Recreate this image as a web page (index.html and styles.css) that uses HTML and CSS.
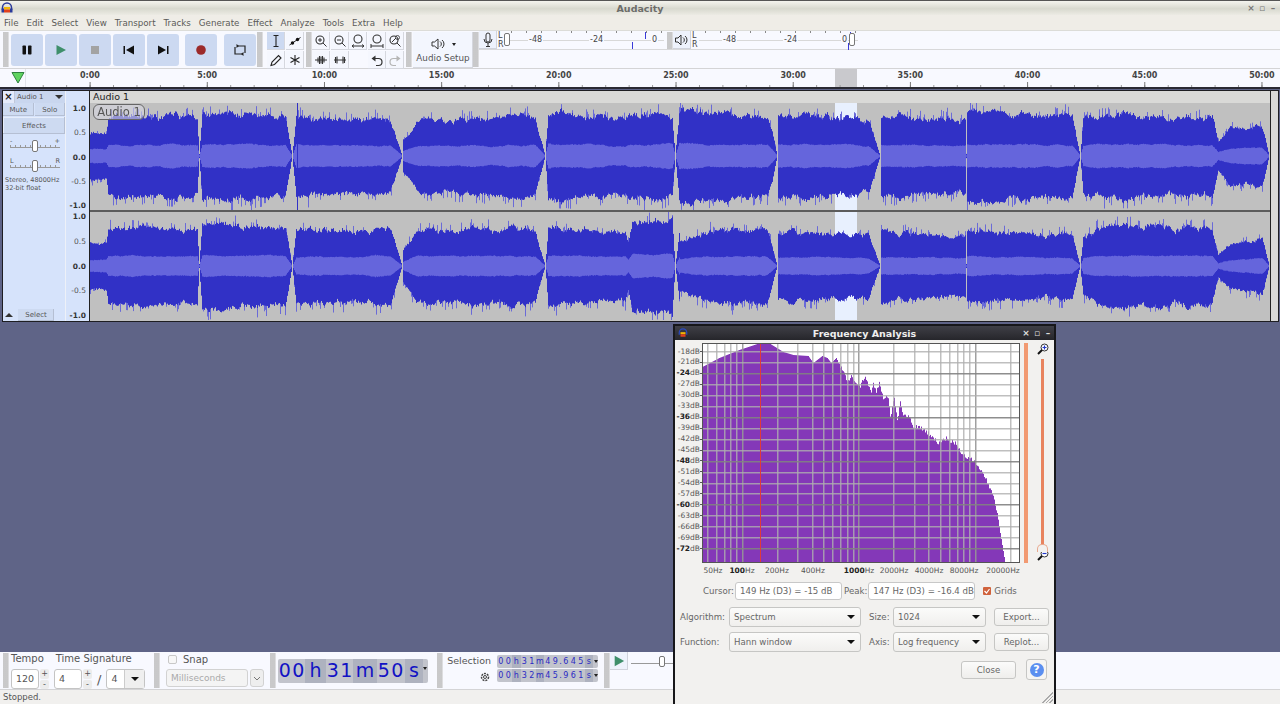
FILE: index.html
```html
<!DOCTYPE html>
<html lang="en">
<head>
    <meta charset="UTF-8">
    <title>Audacity</title>
    <link rel="stylesheet" href="styles.css">
</head>
<body>
<div class="app">
    <div class="titlebar">
        <svg class="app-logo" width="12" height="12" viewBox="0 0 12 12"><path d="M1.5 8V5.5a4.5 4.5 0 0 1 9 0V8" fill="none" stroke="#2b3a9a" stroke-width="1.5"/><rect x="3" y="5" width="6" height="2.5" fill="#f2b705"/><rect x="3" y="7.5" width="6" height="3" fill="#e0401c"/><rect x="0.5" y="6.5" width="2.5" height="4" fill="#2b3a9a"/><rect x="9" y="6.5" width="2.5" height="4" fill="#2b3a9a"/></svg>
        <span class="title-text">Audacity</span>
        <div class="win-buttons"><span>×</span><span class="win-restore">▫</span><span>–</span></div>
    </div>

    <div class="menubar">
        <span>File</span><span>Edit</span><span>Select</span><span>View</span><span>Transport</span><span>Tracks</span><span>Generate</span><span>Effect</span><span>Analyze</span><span>Tools</span><span>Extra</span><span>Help</span>
    </div>

    <div class="toolbars">
        <div class="gripper"></div>
        <div class="transport">
            <button class="t-btn"><svg width="14" height="14" viewBox="0 0 14 14"><rect x="2.5" y="2.5" width="3.5" height="9" rx="0.8" fill="#111"/><rect x="8" y="2.5" width="3.5" height="9" rx="0.8" fill="#111"/></svg></button>
            <button class="t-btn"><svg width="14" height="14" viewBox="0 0 14 14"><path d="M2.5 2 12 7l-9.500 5z" fill="#3f8f6b"/></svg></button>
            <button class="t-btn"><svg width="14" height="14" viewBox="0 0 14 14"><rect x="3" y="3" width="8" height="8" fill="#a3a3a3"/></svg></button>
            <button class="t-btn"><svg width="14" height="14" viewBox="0 0 14 14"><rect x="1.500" y="3" width="1.500" height="8" fill="#111"/><path d="M12 2.500v9L4 7z" fill="#111"/></svg></button>
            <button class="t-btn"><svg width="14" height="14" viewBox="0 0 14 14"><path d="M2 2.500v9L10 7z" fill="#111"/><rect x="11" y="3" width="1.500" height="8" fill="#111"/></svg></button>
            <button class="t-btn t-record"><svg width="14" height="14" viewBox="0 0 14 14"><circle cx="7" cy="7" r="4.800" fill="#9c2a2a"/></svg></button>
            <button class="t-btn t-loop"><svg width="14" height="14" viewBox="0 0 14 14"><path d="M4 3h8v7M10 11H2V4" fill="none" stroke="#222" stroke-width="1.200"/><path d="M3.500 1v4L6 3zM10.500 13V9L8 11z" fill="#222"/></svg></button>
        </div>
        <div class="gripper"></div>

        <div class="tools">
            <button class="tool-btn active"><svg width="14" height="14" viewBox="0 0 14 14"><path d="M4.500 1.500h5M7 1.500v11M4.500 12.500h5" fill="none" stroke="#222" stroke-width="1.100"/></svg></button>
            <button class="tool-btn"><svg width="14" height="14" viewBox="0 0 14 14"><path d="M1.500 11 12.500 3.500" stroke="#222" stroke-width="1"/><circle cx="4.500" cy="9" r="1.700" fill="#111"/><circle cx="9.500" cy="5.500" r="1.700" fill="#111"/></svg></button>
            <button class="tool-btn"><svg width="14" height="14" viewBox="0 0 14 14"><path d="M2 12.500 3 9l6.500-6.500 2.500 2.500L5.500 11.500z" fill="none" stroke="#222" stroke-width="1.100"/></svg></button>
            <button class="tool-btn"><svg width="14" height="14" viewBox="0 0 14 14"><path d="M7 2v10M2.500 4.500l9 5M11.500 4.500l-9 5" stroke="#222" stroke-width="1.100"/></svg></button>
        </div>
        <div class="gripper"></div>

        <div class="tools tools-zoom">
            <button class="tool-btn"><svg width="14" height="14" viewBox="0 0 14 14"><circle cx="6" cy="6" r="4" fill="none" stroke="#333" stroke-width="1.100"/><path d="m9 9 3.500 3.500M4 6h4M6 4v4" stroke="#333" stroke-width="1"/></svg></button>
            <button class="tool-btn"><svg width="14" height="14" viewBox="0 0 14 14"><circle cx="6" cy="6" r="4" fill="none" stroke="#333" stroke-width="1.100"/><path d="m9 9 3.500 3.500M4 6h4" stroke="#333" stroke-width="1"/></svg></button>
            <button class="tool-btn"><svg width="14" height="14" viewBox="0 0 14 14"><circle cx="7" cy="5" r="4" fill="none" stroke="#333" stroke-width="1.100"/><path d="M1 12h12M1 12l2-1.500M1 12l2 1.500M13 12l-2-1.500M13 12l-2 1.500" fill="none" stroke="#333"/></svg></button>
            <button class="tool-btn"><svg width="14" height="14" viewBox="0 0 14 14"><circle cx="7" cy="5" r="4" fill="none" stroke="#333" stroke-width="1.100"/><path d="M1 12h12M1 10v4M13 10v4" fill="none" stroke="#333"/></svg></button>
            <button class="tool-btn"><svg width="14" height="14" viewBox="0 0 14 14"><circle cx="6" cy="6" r="4" fill="none" stroke="#333" stroke-width="1.100"/><path d="m9 9 3.500 3.500M4 8l4-4" stroke="#333" stroke-width="1"/><circle cx="9.500" cy="3.500" r="2" fill="none" stroke="#333" stroke-width=".8"/></svg></button>
            <button class="tool-btn"><svg width="14" height="14" viewBox="0 0 14 14"><path d="M1 7h12" stroke="#333"/><path d="M4 4.500v5M5.500 3v8M7 3.500v7M8.500 3v8M10 4.500v5" stroke="#333" stroke-width="1.100"/></svg></button>
            <button class="tool-btn"><svg width="14" height="14" viewBox="0 0 14 14"><path d="M1 7h12" stroke="#333"/><path d="M2.500 4v6M4 3.500v7M10 3.500v7M11.500 4v6" stroke="#333" stroke-width="1.100"/></svg></button>
            <div class="tool-gap"></div>
            <button class="tool-btn"><svg width="14" height="14" viewBox="0 0 14 14"><path d="M3.500 5.500h5a3 3 0 0 1 0 7H6" fill="none" stroke="#333" stroke-width="1.200"/><path d="M5.500 2.500v6l-4-3z" fill="#333"/></svg></button>
            <button class="tool-btn tool-off"><svg width="14" height="14" viewBox="0 0 14 14"><path d="M10.500 5.500h-5a3 3 0 0 0 0 7H8" fill="none" stroke="#b5b5b5" stroke-width="1.200"/><path d="M8.500 2.500v6l4-3z" fill="#b5b5b5"/></svg></button>
        </div>
        <div class="gripper"></div>

        <button class="audio-setup">
            <span class="audio-icon"><svg width="20" height="14" viewBox="0 0 20 14"><path d="M2 5h2.500L8 2v10L4.500 9H2z" fill="none" stroke="#333"/><path d="M10 4.500a3 3 0 0 1 0 5M12 3a5 5 0 0 1 0 8" fill="none" stroke="#333"/></svg><i class="mini-caret"></i></span>
            <span>Audio Setup</span>
        </button>
        <div class="gripper"></div>

        <div class="meter-stack">
            <div class="meter-row">
                <button class="meter-btn"><svg width="14" height="16" viewBox="0 0 14 16"><rect x="5" y="1" width="4" height="9" rx="2" fill="none" stroke="#333"/><path d="M3 7a4 4 0 0 0 8 0M7 11v3M5 14.500h4" fill="none" stroke="#333"/></svg></button>
                <div class="meter meter-in">
                    <div class="lr"><span>L</span><span>R</span></div>
                    <div class="meter-scale"><span class="m48">-48</span><span class="m24">-24</span><span class="m0">0</span><i class="peak peak-a"></i><i class="peak peak-b"></i></div>
                    <div class="meter-thumb"></div>
                </div>
                <div class="gripper"></div>
                <button class="meter-btn"><svg width="16" height="14" viewBox="0 0 16 14"><path d="M1.500 5H4l3-3v10L4 9H1.500z" fill="none" stroke="#333"/><path d="M9 4.500a3 3 0 0 1 0 5M11 3a5 5 0 0 1 0 8" fill="none" stroke="#333"/></svg></button>
                <div class="meter meter-out">
                    <div class="lr"><span>L</span><span>R</span></div>
                    <div class="meter-scale"><span class="m48">-48</span><span class="m24">-24</span><span class="m0">0</span><i class="peak peak-c"></i><i class="peak peak-d"></i></div>
                    <div class="meter-thumb"></div>
                </div>
            </div>
            <div class="meter-blank"></div>
        </div>
    </div>

    <div class="ruler">
        <div class="ruler-head"><svg width="14" height="13" viewBox="0 0 14 13"><path d="M1 1.500h12L7 12z" fill="#5fd35f" stroke="#2f7f3f"/></svg></div>
        <div class="ruler-marks">
            <span>0:00</span><span>5:00</span><span>10:00</span><span>15:00</span><span>20:00</span><span>25:00</span><span>30:00</span><span>35:00</span><span>40:00</span><span>45:00</span><span>50:00</span>
        </div>
    </div>

    <div class="tracks">
        <div class="track">
            <div class="track-panel">
                <div class="panel-title"><button class="panel-close">×</button><div class="panel-name">Audio 1<i class="caret"></i></div></div>
                <div class="panel-mute"><button>Mute</button><button>Solo</button></div>
                <button class="panel-effects">Effects</button>
                <div class="panel-slider">
                    <div class="slider-labels"><span>-</span><span>+</span></div>
                    <div class="slider-line"><i></i></div>
                </div>
                <div class="panel-slider">
                    <div class="slider-labels"><span>L</span><span>R</span></div>
                    <div class="slider-line"><i></i></div>
                </div>
                <div class="panel-info">Stereo, 48000Hz<br>32-bit float</div>
                <div class="panel-foot"><i class="up-caret"></i><button>Select</button></div>
            </div>
            <div class="vruler">
                <div class="vscale vscale-top"><b>1.0</b><span>0.5</span><b>0.0</b><span>-0.5</span><b>-1.0</b></div>
                <div class="vscale vscale-low"><b>1.0</b><span>0.5</span><b>0.0</b><span>-0.5</span><b>-1.0</b></div>
            </div>
            <div class="wave-col">
                <div class="clip-title">Audio 1</div>
                <canvas id="wave0" class="wave" width="1180" height="107"></canvas>
                <div class="wave-divider"></div>
                <canvas id="wave1" class="wave" width="1180" height="108"></canvas>
                <div class="clip-label">Audio 1</div>
            </div>
            <div class="track-edge"></div>
        </div>
    </div>

    <div class="desktop"></div>

    <div class="bottombar">
        <div class="gripper"></div>
        <div class="tempo-box">
            <div class="tempo-labels"><span>Tempo</span><span>Time Signature</span></div>
            <div class="tempo-inputs">
                <div class="num-input w-tempo">120</div>
                <div class="spin"><span>+</span><span>-</span></div>
                <div class="num-input w-sig">4</div>
                <div class="spin"><span>+</span><span>-</span></div>
                <span class="slash">/</span>
                <div class="sig-combo"><span>4</span><div class="sig-drop"><i class="caret caret-dark"></i></div></div>
            </div>
        </div>
        <div class="gripper"></div>
        <div class="snap-box">
            <label class="snap-check"><i class="check-off"></i>Snap</label>
            <div class="snap-row">
                <div class="snap-combo">Milliseconds</div>
                <div class="snap-drop"><svg width="8" height="5" viewBox="0 0 8 5"><path d="m1 1 3 3 3-3" fill="none" stroke="#777"/></svg></div>
            </div>
        </div>
        <div class="gripper"></div>
        <div class="time-big">
            <span class="d">0</span><span class="d">0</span><span class="u u-h">h</span><span class="d">3</span><span class="d">1</span><span class="u u-m">m</span><span class="d">5</span><span class="d">0</span><span class="u u-s">s</span><i class="mini-caret"></i>
        </div>
        <div class="gripper"></div>
        <div class="selection-box">
            <div class="sel-labels">
                <span>Selection</span>
                <svg width="12" height="12" viewBox="0 0 12 12"><circle cx="6" cy="6" r="3.500" fill="none" stroke="#444" stroke-width="1.500" stroke-dasharray="2 1"/><circle cx="6" cy="6" r="1.500" fill="none" stroke="#444"/></svg>
            </div>
            <div class="sel-times">
                <div class="time-small"><span>0</span><span>0</span><span class="u">h</span><span>3</span><span>1</span><span class="u">m</span><span>4</span><span>9</span><span class="dot">.</span><span>6</span><span>4</span><span>5</span><span class="u">s</span><i class="mini-caret"></i></div>
                <div class="time-small"><span>0</span><span>0</span><span class="u">h</span><span>3</span><span>2</span><span class="u">m</span><span>4</span><span>5</span><span class="dot">.</span><span>9</span><span>6</span><span>1</span><span class="u">s</span><i class="mini-caret"></i></div>
            </div>
        </div>
        <div class="gripper"></div>
        <div class="play-speed">
            <button class="meter-btn"><svg width="12" height="12" viewBox="0 0 14 14"><path d="M2 1 13 7 2 13z" fill="#3f8f6b"/></svg></button>
            <div class="speed-line"><i></i></div>
        </div>
    </div>

    <div class="statusbar">Stopped.</div>

    <div class="dialog">
        <div class="dialog-title">
            <svg class="app-logo" width="10" height="10" viewBox="0 0 12 12"><path d="M1.500 8V5.500a4.500 4.500 0 0 1 9 0V8" fill="none" stroke="#2b4ac0" stroke-width="1.500"/><rect x="3" y="5" width="6" height="2.500" fill="#f2b705"/><rect x="3" y="7.500" width="6" height="3" fill="#e0401c"/></svg>
            <span class="dialog-name">Frequency Analysis</span>
            <div class="win-buttons dark"><span>×</span><span class="win-restore">▫</span><span>–</span></div>
        </div>
        <div class="dialog-body">
            <div class="plot-row">
                <div class="db-axis">
                    <span>-18dB</span><span>-21dB</span><span><b>-24</b>dB</span><span>-27dB</span><span>-30dB</span><span>-33dB</span><span><b>-36</b>dB</span><span>-39dB</span><span>-42dB</span><span>-45dB</span><span><b>-48</b>dB</span><span>-51dB</span><span>-54dB</span><span>-57dB</span><span><b>-60</b>dB</span><span>-63dB</span><span>-66dB</span><span>-69dB</span><span><b>-72</b>dB</span>
                </div>
                <canvas id="spectrum" class="plot" width="318" height="220"></canvas>
                <div class="orange-bar"></div>
                <div class="zoom-col">
                    <svg width="12" height="12" viewBox="0 0 12 12"><circle cx="7.500" cy="4.500" r="3.500" fill="#fff" stroke="#333"/><path d="M5.500 4.500h4M7.500 2.500v4" stroke="#2338c8" stroke-width="1.200"/><path d="M5 7 1 11" stroke="#111" stroke-width="2"/></svg>
                    <div class="zoom-track"><i></i></div>
                    <svg width="12" height="12" viewBox="0 0 12 12"><circle cx="7.500" cy="4.500" r="3.500" fill="#fff" stroke="#333"/><path d="M5.500 4.500h4" stroke="#2338c8" stroke-width="1.200"/><path d="M5 7 1 11" stroke="#111" stroke-width="2"/></svg>
                </div>
            </div>
            <svg class="freq-axis" width="381" height="12" viewBox="0 0 381 12">
                <text x="38" y="9">50Hz</text><text x="67" y="9"><tspan class="bold">100</tspan>Hz</text><text x="102" y="9">200Hz</text><text x="138" y="9">400Hz</text><text x="184" y="9"><tspan class="bold">1000</tspan>Hz</text><text x="219" y="9">2000Hz</text><text x="254" y="9">4000Hz</text><text x="289" y="9">8000Hz</text><text x="328" y="9">20000Hz</text>
            </svg>
            <div class="readout">
                <span class="r-cursor">Cursor:</span><div class="field f-cursor">149 Hz (D3) = -15 dB</div>
                <span class="r-peak">Peak:</span><div class="field f-peak">147 Hz (D3) = -16.4 dB</div>
                <label class="grids"><i class="check-on"><svg width="8" height="8" viewBox="0 0 8 8"><path d="m1.500 4 2 2 3-4" fill="none" stroke="#fff" stroke-width="1.200"/></svg></i>Grids</label>
            </div>
            <div class="form-row">
                <span class="f-label">Algorithm:</span><div class="combo c-wide">Spectrum<i class="caret caret-dark"></i></div>
                <span class="f-label2">Size:</span><div class="combo c-small">1024<i class="caret caret-dark"></i></div>
                <button class="dlg-btn">Export...</button>
            </div>
            <div class="form-row">
                <span class="f-label">Function:</span><div class="combo c-wide">Hann window<i class="caret caret-dark"></i></div>
                <span class="f-label2">Axis:</span><div class="combo c-small">Log frequency<i class="caret caret-dark"></i></div>
                <button class="dlg-btn">Replot...</button>
            </div>
            <div class="close-row">
                <button class="dlg-btn">Close</button>
                <button class="help-btn"><span>?</span></button>
            </div>
            <div class="grip"></div>
        </div>
    </div>
</div>
<script src="script.js"></script>
</body>
</html>
```

FILE: styles.css
```css
* {
    box-sizing: border-box;
}

html, body {
    margin: 0;
    padding: 0;
    width: 1280px;
    height: 704px;
    overflow: hidden;
}

body {
    font-family: "DejaVu Sans", sans-serif;
    color: #555;
    font-size: 10px;
}

button {
    font-family: inherit;
    color: inherit;
    padding: 0;
    margin: 0;
    border: none;
}

.app {
    position: relative;
    width: 1280px;
    height: 704px;
    display: flex;
    flex-direction: column;
    overflow: hidden;
}

/* window chrome */
.titlebar {
    height: 15px;
    flex: none;
    display: flex;
    align-items: center;
    position: relative;
    border-top: 1px solid #555;
    background: linear-gradient(#f4f4ee, #d8d9cf 55%, #ecebe4);
}

.app-logo {
    margin-left: 1px;
    flex: none;
}

.title-text {
    position: absolute;
    left: 0;
    right: 0;
    text-align: center;
    font-size: 9.5px;
    font-weight: bold;
    color: #6d6d6a;
}

.win-buttons {
    margin-left: auto;
    margin-right: 3px;
    display: flex;
    gap: 3px;
    color: #777;
    font-size: 9px;
    font-weight: bold;
}

.win-buttons span {
    width: 8px;
    text-align: center;
}

.menubar {
    height: 16px;
    flex: none;
    background: #efede7;
    display: flex;
    align-items: center;
    padding-left: 4px;
    gap: 8px;
    font-size: 8.7px;
    color: #5a5a58;
    border-bottom: 1px solid #dcdcd8;
}

/* top toolbars */
.toolbars {
    height: 38px;
    flex: none;
    display: flex;
    background: #f8f9ff;
    padding-left: 3px;
    border-bottom: 1px solid #d4d4d6;
}

.gripper {
    width: 6px;
    flex: none;
    background-color: #f5f6fa;
    background-image: radial-gradient(circle, #c6c6c6 0.7px, transparent 0.8px);
    background-size: 2px 2px;
    border-right: 1px solid #dddddf;
    margin: 1px 0;
}

.transport {
    display: flex;
    align-items: center;
    padding: 0 1px 0 2px;
    gap: 2px;
}

.t-btn {
    width: 32px;
    height: 32px;
    background: #ccd9f1;
    border-radius: 3px;
    display: flex;
    align-items: center;
    justify-content: center;
}

.t-record {
    margin-left: 4px;
}

.t-loop {
    margin-left: 5px;
}

.tools {
    display: grid;
    grid-template-columns: 18px 18px;
    grid-template-rows: 18px 18px;
    gap: 1px;
    padding: 1px 2px 0 2px;
    margin-left: 2px;
}

.tools-zoom {
    grid-template-columns: repeat(5, 18px);
    column-gap: 0.5px;
    padding-left: 0;
    margin-left: 0;
}

.tool-btn {
    width: 18px;
    height: 18px;
    background: #f5f7fe;
    box-shadow: inset -1px -1px 0 #d5d7de;
    display: flex;
    align-items: center;
    justify-content: center;
}

.tool-btn.active {
    background: #ccd9f1;
}

.audio-setup {
    width: 60px;
    margin: 1px 0 0 1px;
    height: 36px;
    background: #f3f6fe;
    box-shadow: inset -1px -1px 0 #d5d7de;
    display: flex;
    flex-direction: column;
    align-items: center;
    justify-content: center;
    gap: 2px;
    font-size: 8.8px;
}

.audio-icon {
    display: flex;
    align-items: center;
    gap: 2px;
    color: #333;
}

.mini-caret {
    display: inline-block;
    width: 0;
    height: 0;
    border-left: 2.5px solid transparent;
    border-right: 2.5px solid transparent;
    border-top: 3px solid #222;
}

.meter-stack {
    flex: 1;
    display: flex;
    flex-direction: column;
}

.meter-row {
    height: 19px;
    display: flex;
    border-bottom: 1px solid #d8d8da;
}

.meter-row .gripper {
    margin: 1px 0 0 0;
}

.meter-btn {
    width: 18px;
    height: 18px;
    flex: none;
    background: #eef2fc;
    box-shadow: inset -1px -1px 0 #d0d3dc;
    display: flex;
    align-items: center;
    justify-content: center;
}

.meter {
    position: relative;
    display: flex;
    font-size: 8px;
}

.meter-in {
    width: 170px;
}

.meter-out {
    width: 170px;
}

.lr {
    width: 8px;
    display: flex;
    flex-direction: column;
    font-size: 8px;
    line-height: 9px;
    padding-left: 1px;
    color: #444;
}

.meter-scale {
    position: relative;
    flex: 1;
    height: 18px;
    margin-right: 3px;
    background-image:
        linear-gradient(#d8d8d8, #d8d8d8),
        linear-gradient(to right, #888 1px, transparent 1px);
    background-size: 100% 1px, 15px 2px;
    background-position: 0 9px, 6px 0;
    background-repeat: no-repeat, repeat-x;
}

.meter-scale span {
    position: absolute;
    top: 4px;
    line-height: 10px;
    padding: 0 1px;
    background: #f8f9ff;
    color: #444;
    font-size: 8px;
}

.meter-in .m48 { left: 23px; }
.meter-in .m24 { left: 84px; }
.meter-in .m0 { left: 146px; }
.meter-out .m48 { left: 23px; }
.meter-out .m24 { left: 84px; }
.meter-out .m0 { left: 142px; }

.peak {
    position: absolute;
    width: 1px;
    background: #3a3ad8;
}

.peak-a { left: 140px; top: 1px; height: 7px; }
.peak-b { left: 127px; top: 11px; height: 7px; }
.peak-c { left: 151px; top: 1px; height: 3px; }
.peak-d { left: 149px; top: 12px; height: 7px; }

.meter-thumb {
    position: absolute;
    left: 7px;
    top: 2px;
    width: 6px;
    height: 13px;
    background: #fff;
    border: 1px solid #777;
    border-radius: 2px;
}

.meter-out .meter-thumb {
    left: 158px;
}

.meter-blank {
    flex: 1;
}

/* time ruler */
.ruler {
    height: 18px;
    flex: none;
    display: flex;
    background: #f8f9ff;
}

.ruler-head {
    width: 26px;
    flex: none;
    padding: 2px 0 0 11px;
    border-right: 1px solid #e2e3ea;
}

.ruler-marks {
    flex: 1;
    margin-left: 5.4px;
    display: flex;
    background-image:
        linear-gradient(to right, #777 1px, transparent 1px),
        linear-gradient(to right, #999 1px, transparent 1px),
        linear-gradient(#c9c9cd, #c9c9cd);
    background-size: 117.2px 5px, 23.44px 2px, 22px 18px;
    background-repeat: repeat-x, repeat-x, no-repeat;
    background-position: 58.6px 100%, 11.72px 100%, 803.6px 0;
}

.ruler-marks span {
    width: 117.2px;
    flex: none;
    text-align: center;
    font-size: 8px;
    font-weight: bold;
    color: #444;
    line-height: 14px;
}

/* tracks */
.tracks {
    height: 236px;
    flex: none;
    background: #5f6487;
    border-top: 2px solid #2a2a33;
    padding: 1px 1px 1px 2px;
}

.track {
    height: 232px;
    display: flex;
    border: 1px solid #1e1e22;
    background: #d6e3fb;
}

.track-panel {
    width: 63px;
    flex: none;
    display: flex;
    flex-direction: column;
    background: #d6e3fb;
    border-right: 1px solid #eef1f8;
    font-size: 7px;
}

.panel-title {
    display: flex;
    height: 12px;
}

.panel-close {
    width: 12px;
    background: #e4eafa;
    font-size: 10px;
    font-weight: bold;
    color: #222;
    line-height: 10px;
    border-right: 1px solid #c0c8da;
}

.panel-name {
    flex: 1;
    background: #c9d6ee;
    padding-left: 2px;
    display: flex;
    align-items: center;
    justify-content: space-between;
    padding-right: 2px;
    font-size: 7px;
}

.caret {
    display: inline-block;
    width: 0;
    height: 0;
    border-left: 4px solid transparent;
    border-right: 4px solid transparent;
    border-top: 4px solid #333;
}

.caret-dark {
    border-top-color: #111;
}

.panel-mute {
    display: flex;
    height: 13px;
    gap: 1px;
}

.panel-mute button {
    flex: 1;
    background: #cddaf1;
    box-shadow: inset -1px -1px 0 #b5bfd3;
    font-size: 7px;
}

.panel-effects {
    height: 17px;
    margin-top: 1px;
    background: #cddaf1;
    box-shadow: inset -1px -1px 0 #b5bfd3, inset 1px 1px 0 #e6edfb;
    font-size: 7px;
}

.panel-slider {
    margin: 3px 5px 0 7px;
    height: 17px;
}

.slider-labels {
    display: flex;
    justify-content: space-between;
    font-size: 6.5px;
    line-height: 8px;
}

.slider-line {
    position: relative;
    height: 3px;
    border-bottom: 1px solid #999;
    background-image: linear-gradient(to right, #999 1px, transparent 1px);
    background-size: 5px 2px;
    background-repeat: repeat-x;
}

.slider-line i {
    position: absolute;
    left: 22px;
    top: -5px;
    width: 6px;
    height: 12px;
    background: #fff;
    border: 1px solid #777;
    border-radius: 2px;
}

.panel-info {
    margin: 2px 0 0 2px;
    line-height: 8px;
    font-size: 6.5px;
    color: #555;
}

.panel-foot {
    margin-top: auto;
    display: flex;
    height: 12px;
    align-items: center;
}

.up-caret {
    width: 0;
    height: 0;
    margin: 0 3px 0 2px;
    border-left: 4px solid transparent;
    border-right: 4px solid transparent;
    border-bottom: 4px solid #333;
}

.panel-foot button {
    flex: 1;
    height: 12px;
    margin-left: 2px;
    margin-right: 11px;
    background: #cddaf1;
    box-shadow: inset -1px -1px 0 #b5bfd3;
    font-size: 7px;
}

.vruler {
    width: 24px;
    flex: none;
    background: #d6e3fb;
    display: flex;
    flex-direction: column;
    font-size: 7.5px;
    border-right: 1px solid #222;
}

.vscale {
    display: flex;
    flex-direction: column;
    justify-content: space-between;
    align-items: flex-end;
    padding-right: 3px;
    line-height: 10px;
}

.vscale-top {
    margin-top: 13px;
    height: 107px;
}

.vscale-low {
    margin-top: 1px;
    height: 109px;
}

.vscale b {
    color: #333;
}

.wave-col {
    position: relative;
    width: 1180px;
    flex: none;
    display: flex;
    flex-direction: column;
    background: #c0c0c0;
}

.clip-title {
    height: 12px;
    flex: none;
    background: #d9d9d7;
    font-size: 9.5px;
    color: #222;
    line-height: 11px;
    padding-left: 3px;
}

.wave {
    display: block;
    flex: none;
}

.wave-divider {
    height: 2px;
    flex: none;
    background: #5c5c5c;
}

.clip-label {
    position: absolute;
    left: 3px;
    top: 13px;
    width: 52px;
    height: 16px;
    border: 1px solid #666;
    border-radius: 6px;
    background: rgba(215, 215, 225, 0.6);
    font-size: 11.5px;
    line-height: 14px;
    text-align: center;
    color: #555;
}

.track-edge {
    flex: 1;
    background: #d9d9d7;
    border-left: 1px solid #222;
}

.desktop {
    flex: 1;
    background: #5f6487;
}

/* bottom toolbars */
.bottombar {
    height: 38px;
    flex: none;
    display: flex;
    background: #f8f9ff;
    padding-left: 3px;
    border-bottom: 1px solid #d4d4d6;
}

.tempo-box {
    width: 145px;
    padding: 0 0 0 2px;
    flex: none;
}

.tempo-labels {
    display: flex;
    gap: 12px;
    font-size: 10px;
    line-height: 13px;
}

.tempo-inputs {
    display: flex;
    align-items: center;
    margin-top: 4px;
}

.num-input {
    height: 20px;
    background: #fff;
    border: 1px solid #c4c4c4;
    border-radius: 3px;
    font-size: 9.5px;
    line-height: 18px;
    padding-left: 4px;
}

.w-tempo {
    width: 28px;
}

.w-sig {
    width: 28px;
    margin-left: 5px;
}

.spin {
    width: 9px;
    height: 20px;
    margin-left: 1px;
    display: flex;
    flex-direction: column;
    gap: 1px;
    font-size: 8px;
    line-height: 9px;
    text-align: center;
}

.spin span {
    flex: 1;
    background: #ececec;
    border-radius: 2px;
}

.slash {
    font-size: 13px;
    margin: 0 5px 0 5px;
}

.sig-combo {
    width: 39px;
    height: 20px;
    display: flex;
    background: #fff;
    border: 1px solid #c4c4c4;
    border-radius: 3px;
    font-size: 9.5px;
    line-height: 18px;
    padding-left: 4px;
    justify-content: space-between;
}

.sig-drop {
    width: 20px;
    background: #efefef;
    display: flex;
    align-items: center;
    justify-content: center;
    border-left: 1px solid #ccc;
}

.snap-box {
    width: 110px;
    flex: none;
    padding: 1px 0 0 6px;
}

.snap-check {
    display: flex;
    align-items: center;
    gap: 6px;
    margin-left: 2px;
    font-size: 10px;
    line-height: 13px;
    color: #555;
}

.check-off {
    width: 9px;
    height: 9px;
    background: #f7f7f7;
    border: 1px solid #c8c8c8;
    border-radius: 2px;
}

.snap-row {
    display: flex;
    margin-top: 3px;
    gap: 2px;
}

.snap-combo {
    width: 82px;
    height: 18px;
    background: #f4f4f4;
    border: 1px solid #d2d2d2;
    border-radius: 3px;
    font-size: 9px;
    line-height: 16px;
    padding-left: 4px;
    color: #aaa;
}

.snap-drop {
    width: 14px;
    height: 18px;
    background: #eee;
    border: 1px solid #d2d2d2;
    border-radius: 3px;
    display: flex;
    align-items: center;
    justify-content: center;
}

.time-big {
    width: 150px;
    flex: none;
    height: 24px;
    margin: 7px 9px 0 2px;
    background: #c2c4cc;
    border-radius: 2px;
    display: flex;
    font-size: 19px;
    line-height: 23px;
    color: #1212c4;
    text-align: center;
}

.time-big .d {
    width: 13.5px;
}

.time-big .u {
    background: #aeb2bf;
}

.time-big .u-h {
    width: 21px;
}

.time-big .u-m {
    width: 24px;
}

.time-big .u-s {
    width: 18px;
    margin-left: 1px;
}

.time-big .mini-caret {
    margin-top: 8px;
}

.selection-box {
    width: 161px;
    flex: none;
    display: flex;
    padding: 3px 0 0 5px;
}

.sel-labels {
    width: 49px;
    display: flex;
    flex-direction: column;
    align-items: flex-end;
    padding-right: 6px;
    font-size: 9.5px;
    line-height: 12px;
    gap: 4px;
}

.sel-times {
    display: flex;
    flex-direction: column;
    gap: 1px;
}

.time-small {
    width: 101px;
    height: 13px;
    background: #c2c4cc;
    border-radius: 2px;
    display: flex;
    align-items: center;
    font-size: 8px;
    color: #2a2ac4;
    text-align: center;
}

.time-small span {
    width: 8px;
    line-height: 13px;
}

.time-small .u {
    width: 9px;
    background: #aeb2bf;
}

.time-small .dot {
    width: 3px;
}

.time-small .mini-caret {
    margin-left: 1px;
}

.play-speed {
    flex: 1;
    display: flex;
    align-items: flex-start;
}

.speed-line {
    position: relative;
    width: 60px;
    height: 3px;
    margin: 9px 0 0 3px;
    border-bottom: 1px solid #999;
}

.speed-line i {
    position: absolute;
    left: 28px;
    top: -5px;
    width: 6px;
    height: 11px;
    background: #fff;
    border: 1px solid #777;
    border-radius: 2px;
}

.statusbar {
    height: 14px;
    flex: none;
    background: #f1f0ee;
    font-size: 8.5px;
    line-height: 14px;
    padding-left: 3px;
}

/* frequency analysis window */
.dialog {
    position: absolute;
    left: 673px;
    top: 324px;
    width: 383px;
    height: 382px;
    background: #f2f1ef;
    border: 2px solid #17171a;
    display: flex;
    flex-direction: column;
    color: #666;
    font-size: 8.6px;
}

.dialog-title {
    position: relative;
    height: 14px;
    flex: none;
    background: linear-gradient(#3f3f46, #26262b);
    display: flex;
    align-items: center;
    padding-left: 2px;
}

.dialog-name {
    position: absolute;
    left: 0;
    right: 0;
    text-align: center;
    color: #eee;
    font-size: 9.5px;
    font-weight: bold;
}

.win-buttons.dark {
    color: #ddd;
    margin-right: 2px;
}

.dialog-body {
    position: relative;
    flex: 1;
}

.plot-row {
    display: flex;
    height: 220px;
    margin-top: 3px;
}

.db-axis {
    width: 27px;
    flex: none;
    display: flex;
    flex-direction: column;
    padding-top: 3.5px;
    align-items: flex-end;
    font-size: 7.5px;
    color: #555;
    line-height: 10.96px;
}

.db-axis span::after {
    content: "";
    display: inline-block;
    width: 2px;
    height: 1px;
    background: #555;
    vertical-align: middle;
}

.db-axis b {
    color: #222;
}

.plot {
    display: block;
    flex: none;
}

.orange-bar {
    width: 4px;
    margin-left: 4px;
    background: #f29a72;
}

.zoom-col {
    width: 26px;
    margin-left: 2px;
    display: flex;
    flex-direction: column;
    align-items: center;
    padding-left: 2px;
}

.zoom-track {
    position: relative;
    width: 3px;
    height: 188px;
    margin: 4px 0 2px;
    background: #e8835e;
}

.zoom-track i {
    position: absolute;
    left: -4px;
    bottom: -5px;
    width: 11px;
    height: 8px;
    background: #f2f1ef;
    border: 1px solid #e8a98f;
    border-bottom: none;
    border-radius: 5px 5px 0 0;
}

.freq-axis {
    display: block;
    margin-top: 1px;
}

.freq-axis text {
    font-family: "DejaVu Sans", sans-serif;
    font-size: 7.5px;
    text-anchor: middle;
    fill: #555;
}

.freq-axis .bold {
    font-weight: bold;
    fill: #222;
}

.readout {
    display: flex;
    align-items: center;
    height: 18px;
    margin-top: 6px;
    padding-left: 28px;
}

.r-peak {
    margin-left: 2px;
}

.field {
    width: 107px;
    height: 18px;
    background: #fff;
    border: 1px solid #c8c8c8;
    border-radius: 3px;
    line-height: 16px;
    padding-left: 4px;
    margin-left: 1px;
    overflow: hidden;
    white-space: nowrap;
}

.grids {
    display: flex;
    align-items: center;
    gap: 3px;
    margin-left: 8px;
}

.check-on {
    width: 8px;
    height: 8px;
    display: flex;
    background: #d0623c;
    border-radius: 1px;
}

.form-row {
    display: flex;
    align-items: center;
    height: 20px;
    margin-top: 7px;
    padding-left: 5px;
}

.form-row + .form-row {
    margin-top: 5px;
}

.f-label {
    width: 49px;
    flex: none;
}

.f-label2 {
    width: 24px;
    margin-left: 8px;
    flex: none;
}

.combo {
    height: 20px;
    background: linear-gradient(#fbfbfa, #f0efed);
    border: 1px solid #c6c6c4;
    border-radius: 3px;
    display: flex;
    align-items: center;
    justify-content: space-between;
    padding: 0 5px 0 4px;
    flex: none;
}

.c-wide {
    width: 132px;
}

.c-small {
    width: 93px;
}

.dlg-btn {
    width: 55px;
    height: 18px;
    margin-left: 8px;
    background: linear-gradient(#fbfbfa, #efeeec);
    border: 1px solid #c6c6c4;
    border-radius: 3px;
    font-size: 8.6px;
    color: #666;
    flex: none;
}

.close-row {
    display: flex;
    align-items: center;
    justify-content: flex-end;
    margin-top: 7px;
    padding-right: 7px;
}

.help-btn {
    width: 21px;
    height: 21px;
    margin-left: 10px;
    background: #f6f5f3;
    border: 1px solid #c6c6c4;
    border-radius: 3px;
    display: flex;
    align-items: center;
    justify-content: center;
}

.help-btn span {
    width: 14px;
    height: 14px;
    border-radius: 50%;
    background: #5b8ff0;
    color: #fff;
    font-size: 11px;
    line-height: 14px;
    font-weight: bold;
}

.grip {
    position: absolute;
    right: 1px;
    bottom: 1px;
    width: 12px;
    height: 12px;
    background: repeating-linear-gradient(135deg, transparent 0, transparent 1.5px, #aaa 1.5px, #aaa 2.5px);
    clip-path: polygon(100% 0, 100% 100%, 0 100%);
}
```

FILE: script.js
```js
// simple seeded random so the waveform looks the same every time
let seed = 12345;
function rnd() {
    seed = (seed * 16807) % 2147483647;
    return seed / 2147483647;
}

const envelopes = [
    [[90,24],[106,25],[108,41],[197,40],[199,2],[202,44],[285,39],[292,0],[296,39],[390,37],[402,0],[403,17],[417,36],[535,39],[545,0],[548,45],[625,37],[628,42],[672,44],[675,0],[679,45],[767,41],[772,25],[777,0],[778,42],[868,38],[880,0],[881,40],[965,38],[966,2],[967,44],[1072,40],[1080,0],[1083,38],[1100,42],[1212,40],[1218,15],[1230,29],[1262,30],[1269,0]],
    [[90,23],[106,24],[108,40],[197,37],[199,2],[202,43],[285,40],[292,0],[296,37],[390,39],[402,0],[403,16],[417,39],[535,37],[545,0],[548,39],[625,36],[628,26],[632,46],[672,47],[675,0],[679,32],[680,26],[703,36],[767,37],[777,0],[778,34],[868,32],[880,0],[881,34],[965,31],[966,2],[967,36],[1072,32],[1080,0],[1083,32],[1107,40],[1212,40],[1218,11],[1230,22],[1262,29],[1269,0]]
];
const rmsRatio = [0.27, 0.25];

function envAt(points, x) {
    for (let i = 1; i < points.length; i++) {
        if (x <= points[i][0]) {
            const a = points[i - 1], b = points[i];
            return a[1] + (b[1] - a[1]) * (x - a[0]) / (b[0] - a[0]);
        }
    }
    return 0;
}

function drawWave(id, ch) {
    const canvas = document.getElementById(id);
    const ctx = canvas.getContext('2d');
    const h = canvas.height;
    const mid = ch === 0 ? 53 : 54;

    ctx.fillStyle = '#c0c0c0';
    ctx.fillRect(0, 0, canvas.width, h);
    ctx.fillStyle = '#e8f0fe';
    ctx.fillRect(745, 0, 22, h);

    let slow = 0, slowRms = 0;
    for (let i = 0; i < canvas.width; i++) {
        const x = i + 90;
        const env = envAt(envelopes[ch], x);
        if (env <= 0) continue;
        slow = slow * 0.8 + (rnd() - 0.5) * 0.1;
        slowRms = slowRms * 0.9 + (rnd() - 0.5) * 0.02;

        const spikeUp = rnd() < 0.2 ? rnd() * 9 * env / 40 : 0;
        const spikeDown = rnd() < 0.22 ? rnd() * 10 * env / 40 : 0;
        const up = env * (0.93 + slow + rnd() * 0.06);
        const down = env * (0.96 + slow + rnd() * 0.06);

        // thin light tips first, solid body over them
        ctx.fillStyle = '#6a6ad8';
        ctx.fillRect(i, mid - up - spikeUp, 1, up + spikeUp + down + spikeDown);
        ctx.fillStyle = '#3131c6';
        ctx.fillRect(i, mid - up, 1, up + down);

        const rms = Math.max(env * rmsRatio[ch] + env * slowRms + rnd() * 0.5, 0);
        ctx.fillStyle = '#6565dc';
        ctx.fillRect(i, mid - rms, 1, rms * 2);
    }

    // the loud click just after 10:00
    if (ch === 0) {
        ctx.fillStyle = '#3131c6';
        ctx.fillRect(207, 0, 1, h);
    }
}

drawWave('wave0', 0);
drawWave('wave1', 1);

// spectrum outline, px inside the plot
const outline = [[0,24],[17,15],[37,7],[58,0],[68,1],[81,9],[91,12],[106,13],[111,20],[120,13],[125,15],[129,20],[134,15],[140,27],[145,38],[150,33],[153,38],[158,43],[163,33],[169,50],[171,40],[174,50],[177,39],[181,55],[186,54],[188,75],[192,54],[195,79],[198,59],[201,72],[208,75],[211,84],[218,84],[228,92],[236,100],[244,95],[248,98],[253,100],[260,112],[270,117],[280,128],[290,150],[295,170],[298,190],[303,220],[318,220]];

function drawSpectrum() {
    const ctx = document.getElementById('spectrum').getContext('2d');
    const w = 318, h = 220;
    ctx.fillStyle = '#fff';
    ctx.fillRect(0, 0, w, h);

    // one column at a time, with a little jitter on the noisy high end
    ctx.fillStyle = '#8438b8';
    for (let x = 0; x < w; x++) {
        let y = envAt(outline, x);
        if (x > 135 && x < 295) y += (rnd() - 0.5) * 4;
        ctx.fillRect(x, y, 1, h - y);
    }

    // grid over the plot
    const freqX = f => 39.7 + 116.5 * Math.log10(f / 100);
    const freqs = [50, 60, 70, 80, 90, 100, 200, 300, 400, 500, 600, 700, 800, 900, 1000, 2000, 3000, 4000, 5000, 6000, 7000, 8000, 9000, 10000, 20000];
    freqs.forEach(f => {
        const big = f === 100 || f === 1000 || f === 10000;
        ctx.fillStyle = big ? 'rgba(150,150,150,0.9)' : 'rgba(175,175,175,0.8)';
        ctx.fillRect(Math.round(freqX(f)), 0, 1.5, h);
    });
    for (let k = 0; k < 19; k++) {
        const y = Math.round(8 + k * 10.96);
        ctx.fillStyle = k % 4 === 2 ? 'rgba(130,130,130,0.9)' : 'rgba(175,175,175,0.8)';
        ctx.fillRect(0, y, w, 1.5);
    }

    // cursor
    ctx.fillStyle = '#e03a3a';
    ctx.fillRect(58, 0, 1, h);

    ctx.strokeStyle = '#555';
    ctx.strokeRect(0.5, 0.5, w - 1, h - 1);
}

drawSpectrum();
```
